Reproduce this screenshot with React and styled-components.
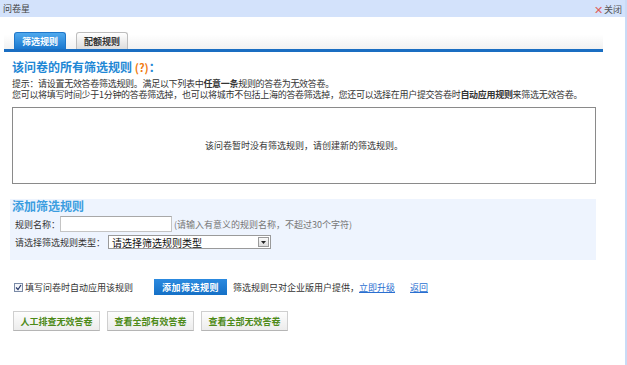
import React from "react";
import styled, { createGlobalStyle } from "styled-components";

const Global = createGlobalStyle`
  html, body { margin: 0; padding: 0; background: #fff; }
  body { font-family: "Noto Sans CJK SC", "Liberation Sans", sans-serif; font-size: 9px; color: #333; }
  * { box-sizing: border-box; }
`;

const Dialog = styled.div`
  width: 627px;
  min-height: 365px;
  border-right: 2px solid #c9dbf6;
  background: #fff;
`;

const TitleBar = styled.div`
  height: 17px;
  background: #d3e2fb;
  display: flex;
  align-items: center;
  justify-content: space-between;
  padding: 0 3px 0 3px;
  font-size: 9px;
  color: #444;
`;

const Close = styled.span`
  display: flex;
  align-items: center;
  gap: 1px;
  color: #555;
  padding-top: 2px;
`;

const CloseX = styled.span`
  color: #e0605a;
  font-size: 11px;
  line-height: 1;
`;

const TabHeader = styled.div`
  height: 35px;
  margin: 0 22px 0 4px;
  padding: 0 0 0 10px;
  display: flex;
  align-items: flex-end;
  gap: 10px;
  background: linear-gradient(#ffffff, #ffffff 55%, #f1f1f1);
  border-bottom: 3px solid #1a6ec2;
`;

const Tab = styled.div`
  width: 52px;
  height: 17px;
  display: flex;
  align-items: center;
  justify-content: center;
  font-size: 9px;
  font-weight: bold;
  border-radius: 3px 3px 0 0;
  color: ${(p) => (p.$active ? "#fff" : "#333")};
  background: ${(p) =>
    p.$active
      ? "linear-gradient(#4fa9ee, #1b78cf)"
      : "linear-gradient(#ffffff, #dcdcdc)"};
  border: 1px solid ${(p) => (p.$active ? "#1f77c9" : "#bdbdbd")};
  border-bottom: none;
`;

const Content = styled.div`
  padding: 0 29px 0 12px;
`;

const Heading = styled.h2`
  margin: 8px 0 0 0;
  font-size: 12px;
  line-height: 14px;
  font-weight: bold;
  color: ${(p) => p.$color || "#1e87d5"};
`;

const Help = styled.span`
  color: #f07a10;
  font-size: 11px;
`;

const Hint = styled.p`
  margin: 4px 0 0 0;
  font-size: 9px;
  line-height: 11px;
  color: #333;
  white-space: nowrap;
  letter-spacing: -0.3px;
`;

const EmptyBox = styled.div`
  margin-top: 7px;
  height: 77px;
  border: 1px solid #8a8a8a;
  display: flex;
  align-items: center;
  justify-content: center;
  font-size: 9px;
  color: #333;
`;

const AddPanel = styled.div`
  margin: 15px 0 0 -2px;
  height: 61px;
  background: #eef4fe;
  padding: 0 0 0 2px;
`;

const PanelHeading = styled(Heading)`
  margin: 0;
  padding-top: 0;
  color: #3b9de0;
`;

const FormRow = styled.div`
  display: flex;
  align-items: center;
  padding-left: 3px;
  margin-top: ${(p) => p.$mt || 0}px;
  height: ${(p) => p.$h || 16}px;
`;

const Label = styled.span`
  font-size: 9px;
  color: #333;
  width: ${(p) => p.$w}px;
  flex: none;
`;

const TextInput = styled.div`
  width: 112px;
  height: 16px;
  background: #fff;
  border: 1px solid #c4c4c4;
  border-top-color: #a8a8a8;
`;

const Note = styled.span`
  margin-left: 2px;
  font-size: 9px;
  color: #777;
`;

const SelectBox = styled.div`
  width: 163px;
  height: 14px;
  background: #fff;
  border: 1px solid #9a9a9a;
  display: flex;
  align-items: center;
  justify-content: space-between;
  padding: 0 1px 0 3px;
  font-size: 10px;
  color: #111;
`;

const SelectArrow = styled.span`
  width: 11px;
  height: 10px;
  border: 1px solid #9a9a9a;
  background: linear-gradient(#fafafa, #dcdcdc);
  display: flex;
  align-items: center;
  justify-content: center;
`;

const ActionRow = styled.div`
  display: flex;
  align-items: center;
  margin-top: 19px;
  height: 16px;
  padding-left: 2px;
`;

const CheckLabel = styled.label`
  display: flex;
  align-items: center;
  gap: 2px;
  font-size: 9px;
  color: #333;
  width: 140px;
`;

const Check = styled.span`
  width: 9px;
  height: 9px;
  border: 1px solid #7a8aa6;
  background: #f4f6fa;
  display: flex;
  align-items: center;
  justify-content: center;
`;

const PrimaryButton = styled.button`
  width: 73px;
  height: 16px;
  border: none;
  padding: 0;
  background: linear-gradient(#2b8ae0, #1570c6);
  color: #fff;
  font-family: inherit;
  font-size: 9px;
  font-weight: bold;
  letter-spacing: 0.5px;
`;

const Info = styled.span`
  margin-left: 6px;
  font-size: 9px;
  color: #333;
`;

const Link = styled.a`
  margin-left: ${(p) => p.$ml || 0}px;
  font-size: 9px;
  color: #2a6fd0;
  text-decoration: underline;
`;

const ButtonRow = styled.div`
  display: flex;
  gap: 7px;
  margin-top: 16px;
  padding-left: 1px;
`;

const GreenButton = styled.button`
  width: 87px;
  height: 20px;
  padding: 0;
  border: 1px solid #cfcfcf;
  border-bottom-color: #b5b5b5;
  background: linear-gradient(#fdfdfd, #ececec);
  color: #4d8a18;
  font-family: inherit;
  font-size: 9px;
  font-weight: bold;
`;

export default function App() {
  return (
    <>
      <Global />
      <Dialog>
        <TitleBar>
          <span>问卷星</span>
          <Close>
            <CloseX>✕</CloseX>关闭
          </Close>
        </TitleBar>
        <TabHeader>
          <Tab $active>筛选规则</Tab>
          <Tab>配额规则</Tab>
        </TabHeader>
        <Content>
          <Heading>
            该问卷的所有筛选规则 <Help>(?)</Help>：
          </Heading>
          <Hint>
            提示：请设置无效答卷筛选规则。满足以下列表中<b>任意一条</b>规则的答卷为无效答卷。
            <br />
            您可以将填写时间少于1分钟的答卷筛选掉，也可以将城市不包括上海的答卷筛选掉，您还可以选择在用户提交答卷时<b>自动应用规则</b>来筛选无效答卷。
          </Hint>
          <EmptyBox>该问卷暂时没有筛选规则，请创建新的筛选规则。</EmptyBox>
          <AddPanel>
            <PanelHeading>添加筛选规则</PanelHeading>
            <FormRow $mt={3}>
              <Label $w={45}>规则名称：</Label>
              <TextInput />
              <Note>(请输入有意义的规则名称，不超过30个字符)</Note>
            </FormRow>
            <FormRow $mt={3} $h={14}>
              <Label $w={93}>请选择筛选规则类型：</Label>
              <SelectBox>
                <span>请选择筛选规则类型</span>
                <SelectArrow>
                  <svg width="5" height="3" viewBox="0 0 5 3">
                    <path d="M0 0 H5 L2.5 3 Z" fill="#222" />
                  </svg>
                </SelectArrow>
              </SelectBox>
            </FormRow>
          </AddPanel>
          <ActionRow>
            <CheckLabel>
              <Check>
                <svg width="7" height="7" viewBox="0 0 7 7">
                  <path d="M1 3.5 L3 5.5 L6 1" stroke="#2a3a6a" strokeWidth="1.2" fill="none" />
                </svg>
              </Check>
              填写问卷时自动应用该规则
            </CheckLabel>
            <PrimaryButton>添加筛选规则</PrimaryButton>
            <Info>筛选规则只对企业版用户提供，</Info>
            <Link href="#">立即升级</Link>
            <Link href="#" $ml={15}>返回</Link>
          </ActionRow>
          <ButtonRow>
            <GreenButton>人工排查无效答卷</GreenButton>
            <GreenButton>查看全部有效答卷</GreenButton>
            <GreenButton>查看全部无效答卷</GreenButton>
          </ButtonRow>
        </Content>
      </Dialog>
    </>
  );
}
